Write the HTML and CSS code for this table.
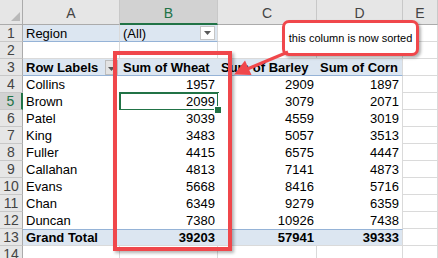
FILE: index.html
```html
<!DOCTYPE html>
<html>
<head>
<meta charset="utf-8">
<link rel="stylesheet" href="styles.css">
</head>
<body>
<div class="sheet">
  <div class="corner"></div>
  <div class="ch">A</div>
  <div class="ch sel">B</div>
  <div class="ch">C</div>
  <div class="ch">D</div>
  <div class="ch">E</div>

  <div class="rh">1</div>
  <div class="c flt">Region</div>
  <div class="c flt split"><span>(All)</span><span class="dd"><svg width="7" height="4" viewBox="0 0 7 4"><path d="M0 0H7L3.5 4Z" fill="#595959"/></svg></span></div>
  <div class="c"></div>
  <div class="c"></div>
  <div class="c"></div>

  <div class="rh">2</div>
  <div class="c"></div>
  <div class="c"></div>
  <div class="c"></div>
  <div class="c"></div>
  <div class="c"></div>

  <div class="rh">3</div>
  <div class="c pvh b split"><span>Row Labels</span><span class="fb"><svg width="7" height="4" viewBox="0 0 7 4"><path d="M0 0H7L3.5 4Z" fill="#595959"/></svg></span></div>
  <div class="c pvh b">Sum of Wheat</div>
  <div class="c pvh b">Sum of Barley</div>
  <div class="c pvh b lastcol">Sum of Corn</div>
  <div class="c"></div>

  <div class="rh">4</div>
  <div class="c pv">Collins</div>
  <div class="c pv num">1957</div>
  <div class="c pv num">2909</div>
  <div class="c pv num lastcol">1897</div>
  <div class="c"></div>

  <div class="rh sel">5</div>
  <div class="c pv">Brown</div>
  <div class="c pv num active">2099</div>
  <div class="c pv num">3079</div>
  <div class="c pv num lastcol">2071</div>
  <div class="c"></div>

  <div class="rh">6</div>
  <div class="c pv">Patel</div>
  <div class="c pv num">3039</div>
  <div class="c pv num">4559</div>
  <div class="c pv num lastcol">3019</div>
  <div class="c"></div>

  <div class="rh">7</div>
  <div class="c pv">King</div>
  <div class="c pv num">3483</div>
  <div class="c pv num">5057</div>
  <div class="c pv num lastcol">3513</div>
  <div class="c"></div>

  <div class="rh">8</div>
  <div class="c pv">Fuller</div>
  <div class="c pv num">4415</div>
  <div class="c pv num">6575</div>
  <div class="c pv num lastcol">4447</div>
  <div class="c"></div>

  <div class="rh">9</div>
  <div class="c pv">Callahan</div>
  <div class="c pv num">4813</div>
  <div class="c pv num">7141</div>
  <div class="c pv num lastcol">4873</div>
  <div class="c"></div>

  <div class="rh">10</div>
  <div class="c pv">Evans</div>
  <div class="c pv num">5668</div>
  <div class="c pv num">8416</div>
  <div class="c pv num lastcol">5716</div>
  <div class="c"></div>

  <div class="rh">11</div>
  <div class="c pv">Chan</div>
  <div class="c pv num">6349</div>
  <div class="c pv num">9279</div>
  <div class="c pv num lastcol">6359</div>
  <div class="c"></div>

  <div class="rh">12</div>
  <div class="c pv">Duncan</div>
  <div class="c pv num">7380</div>
  <div class="c pv num">10926</div>
  <div class="c pv num lastcol">7438</div>
  <div class="c"></div>

  <div class="rh">13</div>
  <div class="c pvt b">Grand Total</div>
  <div class="c pvt b num">39203</div>
  <div class="c pvt b num">57941</div>
  <div class="c pvt b num lastcol">39333</div>
  <div class="c"></div>

  <div class="rh">14</div>
  <div class="c"></div>
  <div class="c"></div>
  <div class="c"></div>
  <div class="c"></div>
  <div class="c"></div>

  <div class="redbox"></div>
  <div class="callout">this column is now sorted</div>
  <svg class="arrow" width="438" height="258" viewBox="0 0 438 258">
    <line x1="288" y1="52" x2="245" y2="70" stroke="#f0474b" stroke-width="3"/>
    <path d="M234 74.5 L251.5 75 L245 60.5 Z" fill="#f0474b"/>
  </svg>
</div>
</body>
</html>
```

FILE: styles.css
```css
* { box-sizing: border-box; }
html, body { margin: 0; padding: 0; background: #fff; }
body { width: 438px; height: 258px; overflow: hidden; }

.sheet {
  position: relative;
  display: grid;
  grid-template-columns: 23px 97px 98px 99px 86px 35px;
  grid-template-rows: 25px repeat(14, 17px);
  font-family: "Liberation Sans", Arial, sans-serif;
  font-size: 13px;
  color: #000;
  width: 438px;
  height: 258px;
  overflow: hidden;
}

.corner {
  position: relative;
  background: #e6e6e6;
  border-right: 1px solid #ababab;
  border-bottom: 1px solid #ababab;
}
.corner::after {
  content: "";
  position: absolute;
  right: 2px;
  bottom: 3px;
  width: 0;
  height: 0;
  border-left: 9px solid transparent;
  border-bottom: 9px solid #b9b9b9;
}

.ch {
  background: #e6e6e6;
  color: #444;
  font-size: 14px;
  display: flex;
  align-items: center;
  justify-content: center;
  border-right: 1px solid #c8c8c8;
  border-bottom: 1px solid #ababab;
  padding-top: 2px;
}
.ch.sel {
  background: #d2d2d2;
  color: #217346;
  border-bottom: 2px solid #217346;
}

.rh {
  background: #e6e6e6;
  color: #444;
  font-size: 14px;
  display: flex;
  align-items: center;
  justify-content: center;
  border-right: 1px solid #ababab;
  border-bottom: 1px solid #c8c8c8;
}
.rh.sel {
  background: #d2d2d2;
  color: #217346;
  border-right: 2px solid #217346;
}

.c {
  border-right: 1px solid #dadada;
  border-bottom: 1px solid #dadada;
  display: flex;
  align-items: center;
  padding: 0 3px;
  white-space: nowrap;
  overflow: visible;
  position: relative;
}

.flt {
  background: #dce6f1;
  border-bottom: 1px solid #95b3d7;
}
.split { justify-content: space-between; padding-right: 2px; }

.dd {
  width: 15px;
  height: 14px;
  background: #fff;
  border: 1px solid #c6c6c6;
  display: flex;
  align-items: center;
  justify-content: center;
}
.fb {
  width: 13px;
  height: 15px;
  margin-top: 1px;
  background: #e3e3e3;
  border: 1px solid #bdbdbd;
  display: flex;
  align-items: flex-end;
  justify-content: center;
  padding-bottom: 3px;
}

.pvh {
  background: #dce6f1;
  border-right: none;
  border-bottom: 1px solid #95b3d7;
}
.pv {
  background: #fff;
  border-right: none;
  border-bottom: none;
}
.pvt {
  background: #dce6f1;
  border-right: none;
  border-top: 1px solid #95b3d7;
  border-bottom: 1px solid #dadada;
}
.lastcol { border-right: 1px solid #dadada; }

.b { font-weight: bold; }
.num { justify-content: flex-end; }

.active::after {
  content: "";
  position: absolute;
  left: -1px;
  top: -1px;
  right: -1px;
  bottom: -1px;
  border: 2px solid #217346;
}
.active::before {
  content: "";
  position: absolute;
  right: -4px;
  bottom: -4px;
  width: 6px;
  height: 6px;
  background: #217346;
  border: 1px solid #fff;
  z-index: 2;
}

.redbox {
  position: absolute;
  left: 113px;
  top: 51px;
  width: 119px;
  height: 200px;
  border: 4px solid #f0474b;
  box-shadow: 2px 2px 3px rgba(0, 0, 0, 0.3);
}

.callout {
  position: absolute;
  left: 282px;
  top: 20px;
  width: 137px;
  height: 36px;
  background: #fff;
  border: 3px solid #f0474b;
  border-radius: 7px;
  box-shadow: 2px 2px 3px rgba(0, 0, 0, 0.3);
  font-size: 11px;
  display: flex;
  align-items: center;
  justify-content: center;
  color: #000;
}

.arrow {
  position: absolute;
  left: 0;
  top: 0;
  pointer-events: none;
}
```
